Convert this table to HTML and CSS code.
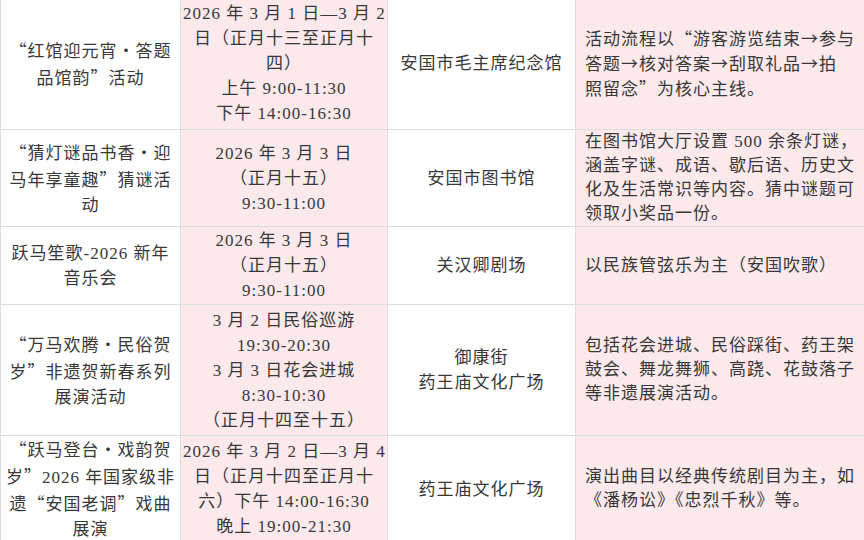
FILE: index.html
```html
<!DOCTYPE html>
<html lang="zh-CN">
<head>
<meta charset="utf-8">
<title>活动安排</title>
<link rel="stylesheet" href="styles.css">
</head>
<body>
<table class="schedule">
  <colgroup>
    <col class="c-name">
    <col class="c-time">
    <col class="c-place">
    <col class="c-desc">
  </colgroup>
  <tbody>
    <tr class="r1">
      <td class="name"><span class="cj">“</span>红馆迎元宵<span class="cj">•</span>答题<br>品馆韵<span class="cj">”</span>活动</td>
      <td class="time">2026 年 3 月 1 日—3 月 2<br>日（正月十三至正月十<br>四）<br>上午 9:00-11:30<br>下午 14:00-16:30</td>
      <td class="place">安国市毛主席纪念馆</td>
      <td class="desc tight">活动流程以<span class="cj">“</span>游客游览结束<span class="cj">→</span>参与<br>答题<span class="cj">→</span>核对答案<span class="cj">→</span>刮取礼品<span class="cj">→</span>拍<br>照留念<span class="cj">”</span>为核心主线。</td>
    </tr>
    <tr class="r2">
      <td class="name"><span class="cj">“</span>猜灯谜品书香<span class="cj">•</span>迎<br>马年享童趣<span class="cj">”</span>猜谜活<br>动</td>
      <td class="time">2026 年 3 月 3 日<br>（正月十五）<br>9:30-11:00</td>
      <td class="place">安国市图书馆</td>
      <td class="desc">在图书馆大厅设置 500 余条灯谜，<br>涵盖字谜、成语、歇后语、历史文<br>化及生活常识等内容。猜中谜题可<br>领取小奖品一份。</td>
    </tr>
    <tr class="r3">
      <td class="name">跃马笙歌-2026 新年<br>音乐会</td>
      <td class="time">2026 年 3 月 3 日<br>（正月十五）<br>9:30-11:00</td>
      <td class="place">关汉卿剧场</td>
      <td class="desc">以民族管弦乐为主（安国吹歌）</td>
    </tr>
    <tr class="r4">
      <td class="name"><span class="cj">“</span>万马欢腾<span class="cj">•</span>民俗贺<br>岁<span class="cj">”</span>非遗贺新春系列<br>展演活动</td>
      <td class="time">3 月 2 日民俗巡游<br>19:30-20:30<br>3 月 3 日花会进城<br>8:30-10:30<br>（正月十四至十五）</td>
      <td class="place">御康街<br>药王庙文化广场</td>
      <td class="desc">包括花会进城、民俗踩街、药王架<br>鼓会、舞龙舞狮、高跷、花鼓落子<br>等非遗展演活动。</td>
    </tr>
    <tr class="r5">
      <td class="name"><span class="cj">“</span>跃马登台<span class="cj">•</span>戏韵贺<br>岁<span class="cj">”</span>2026 年国家级非<br>遗<span class="cj">“</span>安国老调<span class="cj">”</span>戏曲<br>展演</td>
      <td class="time">2026 年 3 月 2 日—3 月 4<br>日（正月十四至正月十<br>六）下午 14:00-16:30<br>晚上 19:00-21:30</td>
      <td class="place">药王庙文化广场</td>
      <td class="desc">演出曲目以经典传统剧目为主，如<br>《潘杨讼》《忠烈千秋》等。</td>
    </tr>
  </tbody>
</table>
</body>
</html>
```

FILE: styles.css
```css
html, body {
  margin: 0;
  padding: 0;
  background: #ffffff;
}

body {
  overflow: hidden;
  height: 540px;
}

.schedule {
  margin-top: -3px;
  width: 864px;
  table-layout: fixed;
  border-collapse: collapse;
  font-family: "Liberation Serif", "Noto Sans CJK SC", serif;
  font-size: 17px;
  letter-spacing: 1px;
  line-height: 25px;
  color: #383838;
}

.c-name { width: 180px; }
.c-time { width: 207px; }
.c-place { width: 188px; }
.c-desc { width: 289px; }

.schedule td {
  border: 1px solid #dcdcdc;
  padding: 0 2px;
  vertical-align: middle;
  text-align: center;
  white-space: nowrap;
}

.cj {
  font-family: "Noto Sans CJK SC", sans-serif;
}

.schedule td.time,
.schedule td.desc {
  background: #fbe9eb;
}

.schedule td.desc {
  text-align: left;
  padding: 0 4px 0 9px;
  line-height: 24px;
  border-right: 2px solid #d9a3b5;
}

.schedule td.desc.tight {
  line-height: 23px;
}

.schedule td.time {
  border-left-color: #e6d9dc;
  border-right-color: #e2dcdd;
}

.r1 { height: 132px; }
.r2 { height: 97px; }
.r3 { height: 78px; }
.r4 { height: 131px; }
.r5 { height: 103px; }

.r5 td {
  border-bottom: 2px solid #d3ddd3;
}
```
